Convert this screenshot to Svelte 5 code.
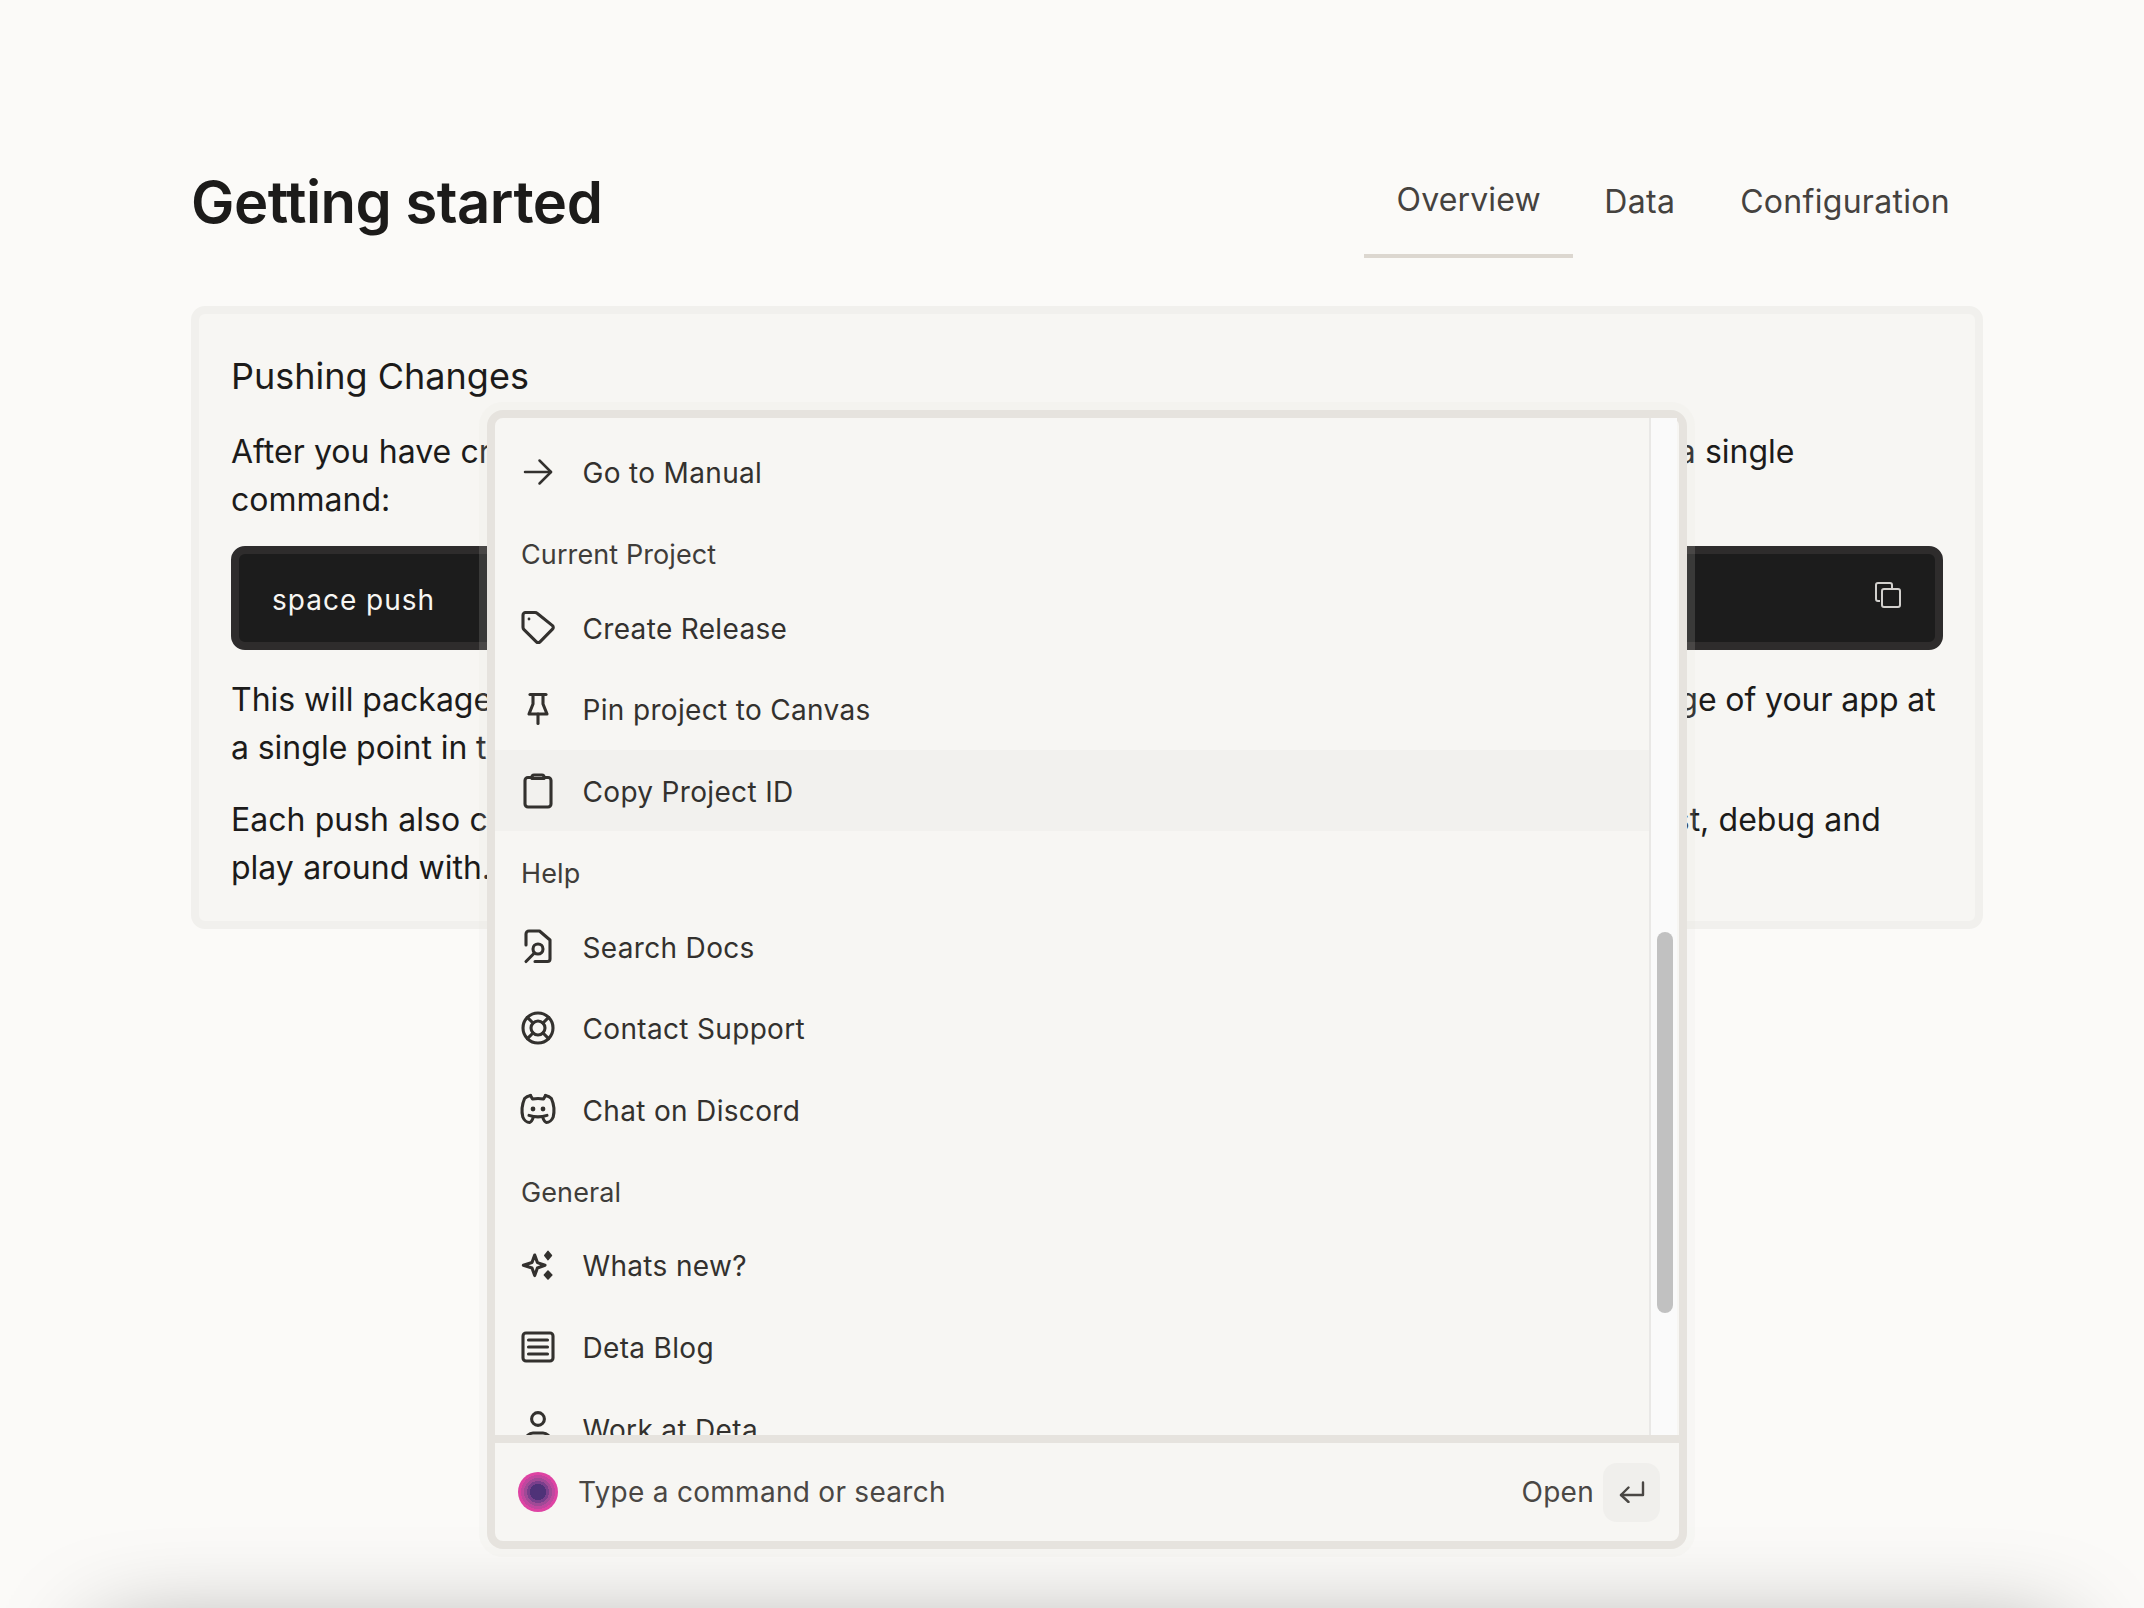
<script>
	const icons = {
		arrow: { d: ['M7 20H33', 'M21.5 8.5L33 20L21.5 31.5'], w: 2.5 },
		tag: {
			d: ['M7.5 5.5H17a3.5 3.5 0 0 1 2.4 1L34.5 18.6a2.5 2.5 0 0 1 0 3.6L22 34.8a2.5 2.5 0 0 1-3.6 0L6 22.6a3.5 3.5 0 0 1-1-2.4V8a2.5 2.5 0 0 1 2.5-2.5Z'],
			fill: ['M9.6 12a1.4 1.4 0 1 0 2.8 0a1.4 1.4 0 1 0-2.8 0Z']
		},
		pin: { d: ['M12 5.5H28', 'M15 5.5V15L11 25H29L25 15V5.5', 'M20 25V34.5'] },
		clipboard: { d: ['M14 6.5H10a3 3 0 0 0-3 3V33a3 3 0 0 0 3 3H30a3 3 0 0 0 3-3V9.5a3 3 0 0 0-3-3H26', 'M14 7.5V6a2 2 0 0 1 2-2H24a2 2 0 0 1 2 2V7.5Z'] },
		search: {
			d: ['M8 19V8a3 3 0 0 1 3-3H21.5L32 14V33a2.5 2.5 0 0 1-2.5 2.5H17', 'M15 23a5 5 0 1 0 10 0a5 5 0 1 0-10 0Z', 'M16.4 27L8 35.5']
		},
		support: {
			d: ['M5 20a15 15 0 1 0 30 0a15 15 0 1 0-30 0Z', 'M13 20a7 7 0 1 0 14 0a7 7 0 1 0-14 0Z', 'M9.4 9.4L15 15', 'M30.6 9.4L25 15', 'M9.4 30.6L15 25', 'M30.6 30.6L25 25']
		},
		discord: {
			d: [
				'M12.5 6.5C9.8 7 8 8 6.6 9.5C4.2 15 3.6 23 4.8 28C6 31 9 33.5 11.5 33.5C13 33 14.6 30.5 15.5 27.6',
				'M27.5 6.5C30.2 7 32 8 33.4 9.5C35.8 15 36.4 23 35.2 28C34 31 31 33.5 28.5 33.5C27 33 25.4 30.5 24.5 27.6',
				'M12.5 6.5L14.5 10C18 9.3 22 9.3 25.5 10L27.5 6.5',
				'M11 26.4C17 28.4 23 28.4 29 26.4'
			],
			fill: ['M12.6 20a2.4 2.4 0 1 0 4.8 0a2.4 2.4 0 1 0-4.8 0Z', 'M22.6 20a2.4 2.4 0 1 0 4.8 0a2.4 2.4 0 1 0-4.8 0Z']
		},
		sparkles: {
			d: ['M16.7 10L19.4 17.6L27 20.3L19.4 23L16.7 30.6L14 23L5.4 20.3L14 17.6Z'],
			fill: ['M30 6.4L33.4 10.6L30 14.6L26.8 10.6Z', 'M30 26L33.8 30L30 34L26.4 30Z'],
			fw: 1.6
		},
		news: { d: ['M8 6H32a3 3 0 0 1 3 3V31a3 3 0 0 1-3 3H8a3 3 0 0 1-3-3V9a3 3 0 0 1 3-3Z', 'M10.5 13H29.5', 'M10.5 20H29.5', 'M10.5 27H29.5'] },
		user: { d: ['M13.6 11a6.4 6.4 0 1 0 12.8 0a6.4 6.4 0 1 0-12.8 0Z', 'M8 35V32a7 7 0 0 1 7-7H25a7 7 0 0 1 7 7V35'] }
	};

	const groups = [
		{ items: [{ icon: 'arrow', label: 'Go to Manual' }] },
		{
			title: 'Current Project',
			items: [
				{ icon: 'tag', label: 'Create Release' },
				{ icon: 'pin', label: 'Pin project to Canvas' },
				{ icon: 'clipboard', label: 'Copy Project ID', active: true }
			]
		},
		{
			title: 'Help',
			items: [
				{ icon: 'search', label: 'Search Docs' },
				{ icon: 'support', label: 'Contact Support' },
				{ icon: 'discord', label: 'Chat on Discord' }
			]
		},
		{
			title: 'General',
			items: [
				{ icon: 'sparkles', label: 'Whats new?' },
				{ icon: 'news', label: 'Deta Blog' },
				{ icon: 'user', label: 'Work at Deta' }
			]
		}
	];
</script>

<div class="page">
	<header class="head">
		<h1>Getting started</h1>
		<nav class="tabs">
			<span class="tab active">Overview</span>
			<span class="tab data">Data</span>
			<span class="tab last">Configuration</span>
		</nav>
	</header>

	<section class="card">
		<h2>Pushing Changes</h2>
		<p class="lead">After you have created a project, you can push the changes to Deta Space's build pipeline with a single command:</p>
		<div class="code">
			<code>space push</code>
			<svg class="copy" width="28" height="28" viewBox="0 0 28 28" fill="none" stroke="#d2d0cd" stroke-width="2" stroke-linejoin="round">
				<path d="M6 20H4a2 2 0 0 1-2-2V4a2 2 0 0 1 2-2H16a2 2 0 0 1 2 2V7" />
				<rect x="8" y="8" width="18" height="18" rx="2" />
			</svg>
		</div>
		<p class="second">This will package and upload your project and create a new revision for you. A revision is an image of your app at a single point in time.</p>
		<p class="third">Each push also creates or updates a Builder Instance, a private copy of this app that you can test, debug and play around with.</p>
	</section>

	<div class="bottom-shade"></div>

	<div class="palette">
		<div class="body">
			<div class="list">
				{#each groups as group}
					{#if group.title}
						<div class="group-title">{group.title}</div>
					{/if}
					{#each group.items as item}
						{@const ic = icons[item.icon]}
						<div class="row" class:active={item.active}>
							<svg width="40" height="40" viewBox="0 0 40 40" fill="none" stroke="currentColor" stroke-width={ic.w ?? 3.1} stroke-linecap="round" stroke-linejoin="round">
								{#each ic.d as d}
									<path {d} />
								{/each}
								{#each ic.fill ?? [] as d}
									<path {d} fill="currentColor" stroke-width={ic.fw ?? 0} />
								{/each}
							</svg>
							<span>{item.label}</span>
						</div>
					{/each}
				{/each}
			</div>
			<div class="track">
				<div class="thumb"></div>
			</div>
		</div>
		<footer class="foot">
			<div class="orb"></div>
			<span class="placeholder">Type a command or search</span>
			<span class="open">Open</span>
			<span class="key">
				<svg width="26" height="22" viewBox="0 0 26 22" fill="none" stroke="#4a4744" stroke-width="2.4" stroke-linecap="round" stroke-linejoin="round">
					<path d="M24 1.5V14H2" />
					<path d="M9.5 6.5L2 14L9.5 21" />
				</svg>
			</span>
		</footer>
	</div>
</div>

<style>
	:global(body) {
		background: #fbfaf8;
	}

	.page {
		position: relative;
		width: 2144px;
		height: 1608px;
		overflow: hidden;
		box-sizing: border-box;
		padding: 138px 161px 0 191px;
		background: #fbfaf8;
		font-family: Inter, 'Liberation Sans', sans-serif;
		color: #1c1b1a;
	}

	.head {
		display: flex;
		justify-content: space-between;
		align-items: flex-start;
		height: 120px;
	}

	h1 {
		margin: 29px 0 0;
		font-size: 58px;
		line-height: 70px;
		font-weight: 600;
		letter-spacing: -0.5px;
	}

	.tabs {
		display: flex;
	}

	.tab {
		box-sizing: border-box;
		height: 120px;
		padding: 44px 32.5px 0;
		font-size: 32px;
		line-height: 40px;
		letter-spacing: 0.3px;
		color: #45423f;
	}

	.tab.active {
		padding-top: 42px;
		letter-spacing: 0.15px;
		border-bottom: 4px solid #dcd7d0;
	}

	.tab.data {
		padding-left: 31px;
	}

	.tab.last {
		padding-right: 33px;
	}

	.card {
		box-sizing: border-box;
		height: 623px;
		margin-top: 48px;
		padding: 40px 32px 0;
		background: #f7f6f3;
		border: 8px solid #f1f0ed;
		border-radius: 14px;
	}

	h2 {
		margin: 0 0 30px;
		font-size: 36px;
		line-height: 44px;
		font-weight: 425;
	}

	p {
		margin: 0 0 24px;
		font-size: 32px;
		line-height: 48px;
	}

	.lead {
		margin-bottom: 22px;
		word-spacing: 0.3px;
	}

	.second {
		word-spacing: -0.25px;
	}

	.third {
		word-spacing: 0.3px;
	}

	.code {
		box-sizing: border-box;
		display: flex;
		justify-content: space-between;
		align-items: center;
		height: 104px;
		margin-bottom: 26px;
		padding: 0 33px 0 33px;
		background: #1c1c1c;
		border: 8px solid #2e2c2c;
		border-radius: 14px;
	}

	code {
		padding-top: 3px;
		font-family: Inter, 'Liberation Sans', sans-serif;
		font-size: 28px;
		letter-spacing: 1px;
		color: #f7f6f3;
	}

	.copy {
		margin-top: -6px;
	}

	.bottom-shade {
		position: absolute;
		left: 110px;
		top: 1648px;
		width: 1940px;
		height: 120px;
		box-shadow: 0 0 100px 10px rgba(0, 0, 0, 0.4);
	}

	.palette {
		position: absolute;
		left: 487px;
		top: 410px;
		box-sizing: border-box;
		width: 1200px;
		height: 1139px;
		display: flex;
		flex-direction: column;
		background: #f7f6f3;
		border: 8px solid #e6e3de;
		border-radius: 16px;
		box-shadow: 0 0 0 8px rgba(230, 227, 222, 0.15);
	}

	.body {
		flex: 1;
		display: flex;
		min-height: 0;
	}

	.list {
		flex: 1;
		padding-top: 13px;
		overflow: hidden;
	}

	.group-title {
		box-sizing: border-box;
		height: 74px;
		padding: 10px 0 0 26px;
		display: flex;
		align-items: center;
		font-size: 27px;
		letter-spacing: 0.1px;
		color: #3f3d3a;
	}

	.row {
		height: 81.6px;
		display: flex;
		align-items: center;
		gap: 24.5px;
		padding-left: 23px;
		font-size: 28px;
		letter-spacing: 0.33px;
		color: #33312e;
	}

	.row span {
		padding-top: 3px;
	}

	.row.active {
		background: #f2f1ee;
	}

	.track {
		position: relative;
		box-sizing: border-box;
		width: 28px;
		margin-right: 2px;
		background: #fafafa;
		border-left: 2px solid #e9e8e6;
	}

	.thumb {
		position: absolute;
		left: 6px;
		top: 514px;
		width: 16px;
		height: 381px;
		border-radius: 8px;
		background: #c1c1c1;
	}

	.foot {
		box-sizing: border-box;
		height: 106px;
		flex-shrink: 0;
		display: flex;
		align-items: center;
		padding-right: 19px;
		border-top: 8px solid #e6e3de;
	}

	.orb {
		width: 40px;
		height: 40px;
		margin-left: 23px;
		border-radius: 50%;
		background: radial-gradient(circle, #4f3278 0 8px, #7a3f8c 8px 11px, #a04a96 11px 14px, #c0479f 14px 17px, #de43a3 17px);
	}

	.placeholder {
		flex: 1;
		margin-left: 20px;
		font-size: 28px;
		letter-spacing: 0.28px;
		color: #4a4744;
	}

	.open {
		font-size: 28px;
		letter-spacing: 0.28px;
		color: #4a4744;
		margin-right: 9px;
	}

	.key {
		width: 57px;
		height: 59px;
		display: flex;
		align-items: center;
		justify-content: center;
		border-radius: 14px;
		background: #f0efec;
	}
</style>
